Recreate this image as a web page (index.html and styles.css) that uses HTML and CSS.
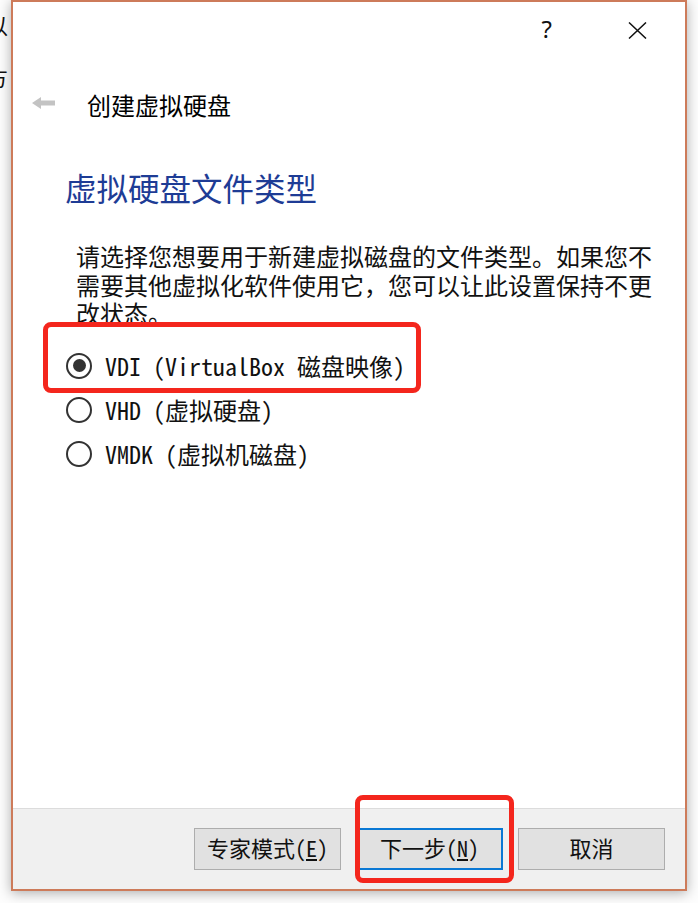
FILE: index.html
```html
<!DOCTYPE html>
<html lang="zh-CN">
<head>
<meta charset="utf-8">
<title>创建虚拟硬盘</title>
<link rel="stylesheet" href="styles.css">
</head>
<body>
<div class="desktop">
  <div class="bg-text">
    <span class="bg-line bg-line-1">以</span>
    <span class="bg-line bg-line-2">方</span>
  </div>
</div>

<div class="window">
  <div class="content">
    <div class="titlebar">
      <span class="help">?</span>
      <svg class="close" width="19" height="17" viewBox="0 0 19 17">
        <path d="M1 0.5 L18 16.5 M18 0.5 L1 16.5" stroke="#111" stroke-width="1.5" fill="none"/>
      </svg>
    </div>
    <div class="header">
      <svg class="back" width="23" height="12" viewBox="0 0 23 12">
        <path d="M0 6 L9 0 L9 3.5 L23 3.5 L23 8.5 L9 8.5 L9 12 Z" fill="#c3c3c3"/>
      </svg>
      <span class="header-title">创建虚拟硬盘</span>
    </div>
    <h1 class="heading">虚拟硬盘文件类型</h1>
    <p class="desc">请选择您想要用于新建虚拟磁盘的文件类型。如果您不需要其他虚拟化软件使用它，您可以让此设置保持不更改状态。</p>
    <div class="options">
      <label class="option">
        <span class="radio checked"></span>
        <span class="opt-text">VDI (VirtualBox 磁盘映像)</span>
      </label>
      <label class="option">
        <span class="radio"></span>
        <span class="opt-text">VHD (虚拟硬盘)</span>
      </label>
      <label class="option">
        <span class="radio"></span>
        <span class="opt-text">VMDK (虚拟机磁盘)</span>
      </label>
    </div>
  </div>
  <div class="footer">
    <button class="btn">专家模式(<u>E</u>)</button>
    <button class="btn btn-focus">下一步(<u>N</u>)</button>
    <button class="btn">取消</button>
  </div>
</div>

<div class="mark mark-1"></div>
<div class="mark mark-2"></div>
</body>
</html>
```
FILE: styles.css
```css
html, body {
  margin: 0;
  padding: 0;
}
body {
  width: 698px;
  height: 903px;
  overflow: hidden;
  background: #ffffff;
  position: relative;
  font-family: "Noto Sans CJK SC", "Noto Sans", sans-serif;
  color: #000;
}

.desktop {
  width: 698px;
  height: 903px;
  background: #fdfdfd;
}
.bg-text {
  position: relative;
  width: 11px;
  height: 100px;
  overflow: hidden;
}
.bg-line {
  position: absolute;
  left: -14px;
  font-size: 22px;
  line-height: 24px;
  color: #111;
}
.bg-line-1 { top: 12px; }
.bg-line-2 { top: 64px; }

.window {
  position: absolute;
  left: 11px;
  top: 0;
  width: 676px;
  height: 891px;
  box-sizing: border-box;
  border: 2px solid #cd7b5a;
  background: #fff;
  display: flex;
  flex-direction: column;
  box-shadow: 0 2px 12px rgba(0, 0, 0, 0.32);
}

.content {
  height: 806px;
  background: #fff;
  display: flex;
  flex-direction: column;
}

.titlebar {
  height: 56px;
  display: flex;
  align-items: center;
  justify-content: flex-end;
  padding-right: 38px;
  gap: 76px;
}
.help {
  font-family: "Noto Sans", sans-serif;
  font-size: 24px;
  line-height: 24px;
  color: #111;
  margin-top: -2px;
}
.close {
  display: block;
}

.header {
  margin-top: 30px;
  height: 34px;
  display: flex;
  align-items: center;
  padding-left: 19px;
  gap: 32px;
}
.back {
  display: block;
  margin-top: -4px;
}
.header-title {
  font-size: 24px;
  line-height: 34px;
  color: #000;
}

.heading {
  margin: 46px 0 0 0;
  padding-left: 52px;
  font-size: 31.5px;
  line-height: 38px;
  font-weight: normal;
  color: #1e3c95;
}

.desc {
  margin: 36px 0 0 0;
  padding-left: 63px;
  width: 585px;
  font-size: 24px;
  line-height: 28.5px;
  color: #111;
}

.options {
  margin-top: 16px;
  padding-left: 53px;
  display: flex;
  flex-direction: column;
}
.option {
  height: 44px;
  display: flex;
  align-items: center;
  gap: 13px;
}
.radio {
  width: 26px;
  height: 26px;
  box-sizing: border-box;
  border: 2px solid #333;
  border-radius: 50%;
  display: flex;
  align-items: center;
  justify-content: center;
  background: #fff;
}
.radio.checked::after {
  content: "";
  width: 13px;
  height: 13px;
  border-radius: 50%;
  background: #333;
}
.opt-text {
  font-family: "Noto Sans Mono CJK SC", "Noto Sans CJK SC", monospace;
  font-size: 24px;
  line-height: 30px;
  color: #111;
}

.footer {
  height: 81px;
  box-sizing: border-box;
  background: #f0f0f0;
  border-top: 1px solid #dcdcdc;
  display: flex;
  justify-content: flex-end;
  align-items: flex-start;
  padding: 19px 20px 0 0;
  gap: 15px;
}
.btn {
  width: 147px;
  height: 42px;
  box-sizing: border-box;
  background: #e1e1e1;
  border: 1px solid #adadad;
  font-family: "Noto Sans Mono CJK SC", "Noto Sans CJK SC", sans-serif;
  font-size: 22px;
  line-height: 28px;
  color: #111;
  padding: 0 0 5px 0;
}
.btn u {
  text-underline-offset: 2px;
}
.btn-focus {
  border: 2px solid #0a78d4;
}

.mark {
  position: absolute;
  box-sizing: border-box;
  border: 5px solid #f4261d;
  border-radius: 8px;
}
.mark-1 {
  left: 43px;
  top: 322px;
  width: 378px;
  height: 71px;
}
.mark-2 {
  left: 355px;
  top: 795px;
  width: 159px;
  height: 88px;
}
```
